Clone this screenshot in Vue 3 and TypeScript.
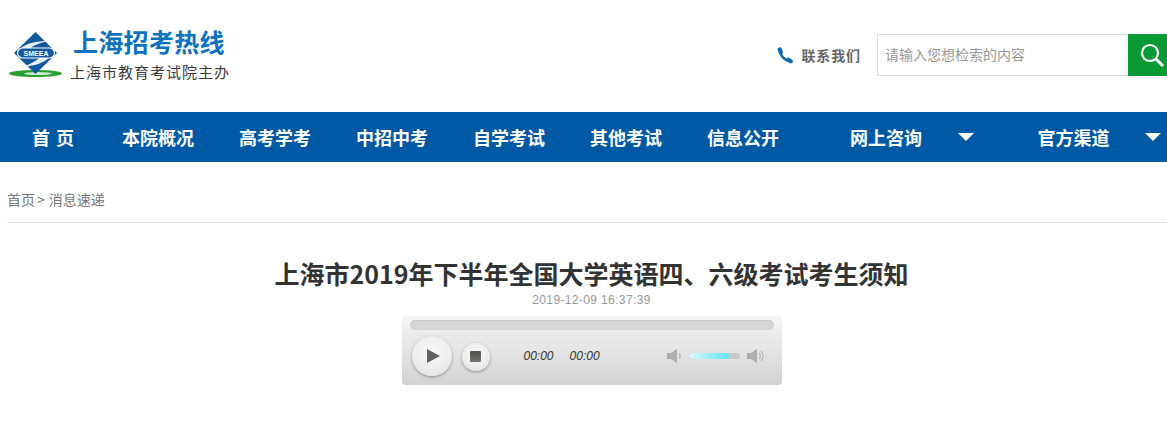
<template>
  <div class="page">
    <header class="top">
      <div class="brand">
        <svg class="logo" width="54" height="49" viewBox="0 0 54 49">
          <ellipse cx="26.500" cy="43.500" rx="26.500" ry="3.600" fill="#2a9f32" />
          <ellipse cx="29" cy="43.600" rx="14" ry="1.500" fill="#cfe9cf" />
          <path d="M26.500 2 48 23 26.500 44 5 23Z" fill="#11599f" />
          <path d="M11 19 C17 13 28 11 39 11 C31 13 25 15 20 19Z" fill="#e9f1f8" />
          <path d="M41 27 C35 33 25 36 14 37 C21 34 27 31 32 27Z" fill="#e9f1f8" />
          <rect x="8.500" y="18" width="37" height="10" rx="5" fill="#11599f" stroke="#fff" stroke-width="1.200" />
          <text x="27" y="26" text-anchor="middle" class="logo-text">SMEEA</text>
        </svg>
        <div class="brand-text">
          <div class="brand-title">上海招考热线</div>
          <div class="brand-sub">上海市教育考试院主办</div>
        </div>
      </div>
      <div class="tools">
        <svg class="phone" width="16" height="17" viewBox="0 0 16 17" fill="none" stroke="#0d6ab0" stroke-linecap="round">
          <path d="M3 4C3.500 8.500 7 12.500 12 14" stroke-width="2.400" />
          <path d="M2.800 2.500l1 3" stroke-width="4.200" />
          <path d="M11.200 12.800l2.600 1.500" stroke-width="4.200" />
        </svg>
        <span class="contact">联系我们</span>
        <div class="search">
          <span class="search-text">请输入您想检索的内容</span>
          <button class="search-btn" type="button" aria-label="搜索">
            <svg width="26" height="26" viewBox="0 0 26 26" fill="none" stroke="#fff">
              <circle cx="11" cy="11" r="8" stroke-width="2.200" />
              <path d="M17 17l7 7" stroke-width="3" />
            </svg>
          </button>
        </div>
      </div>
    </header>

    <nav class="nav">
      <a v-for="item in navItems" :key="item.label" class="nav-item" :class="item.cls">
        {{ item.label }}
        <i v-if="item.caret" class="caret"></i>
      </a>
    </nav>

    <div class="crumb">
      <span>首页</span><span class="sep">&gt;</span><span>消息速递</span>
    </div>

    <main class="article">
      <h1>上海市2019年下半年全国大学英语四、六级考试考生须知</h1>
      <div class="date">2019-12-09 16:37:39</div>

      <div class="player">
        <div class="progress"></div>
        <div class="controls">
          <button class="btn-play" type="button" aria-label="播放"><i></i></button>
          <button class="btn-stop" type="button" aria-label="停止"><i></i></button>
          <span class="time first">00:00</span>
          <span class="time">00:00</span>
          <svg class="vol low" width="18" height="16" viewBox="0 0 18 16">
            <path d="M1 5h4l6-4v14l-6-4H1Z" fill="#adadad" />
            <path d="M13 5.500a3.500 3.500 0 0 1 0 5" fill="none" stroke="#b4b4b4" stroke-width="1.400" />
          </svg>
          <div class="vol-bar"><div class="vol-fill" :style="{ width: volume + '%' }"></div></div>
          <svg class="vol" width="20" height="16" viewBox="0 0 20 16">
            <path d="M1 5h4l6-4v14l-6-4H1Z" fill="#adadad" />
            <path d="M13 5a4 4 0 0 1 0 6M15 3a7 7 0 0 1 0 10" fill="none" stroke="#b4b4b4" stroke-width="1.200" />
          </svg>
        </div>
      </div>
    </main>
  </div>
</template>

<script setup lang="ts">
interface NavItem {
  label: string
  caret?: boolean
  cls?: string
}

const navItems: NavItem[] = [
  { label: '首 页', cls: 'home' },
  { label: '本院概况' },
  { label: '高考学考' },
  { label: '中招中考' },
  { label: '自学考试' },
  { label: '其他考试' },
  { label: '信息公开' },
  { label: '网上咨询', caret: true, cls: 'drop first-drop' },
  { label: '官方渠道', caret: true, cls: 'drop' }
]

const volume = 80
</script>

<style>
html,
body {
  margin: 0;
  background: #fff;
  overflow: hidden;
}
</style>

<style scoped>
.page {
  font-family: "Noto Sans CJK SC", "Liberation Sans", sans-serif;
  color: #333;
}

.top {
  height: 112px;
  display: flex;
  justify-content: space-between;
  box-sizing: border-box;
  padding: 23px 0 0 9px;
}

.brand {
  display: flex;
  align-items: flex-start;
}

.logo {
  margin-top: 7px;
}

.logo-text {
  font-family: "Liberation Sans", sans-serif;
  font-size: 7px;
  font-weight: 700;
  fill: #fff;
}

.brand-text {
  margin-left: 7px;
}

.brand-title {
  font-size: 25px;
  line-height: 36px;
  font-weight: 700;
  color: #0b72c0;
  margin-left: 3px;
  letter-spacing: 0.300px;
}

.brand-sub {
  font-size: 15px;
  line-height: 22px;
  color: #3c3c3c;
  letter-spacing: 1px;
  margin-top: 2px;
}

.tools {
  display: flex;
  align-items: center;
  height: 42px;
  margin-top: 11px;
}

.phone {
  margin-right: 8px;
  margin-top: 0;
}

.contact {
  font-size: 14px;
  font-weight: 700;
  color: #666;
  letter-spacing: 0.900px;
  margin-right: 16px;
}

.search {
  width: 290px;
  height: 42px;
  box-sizing: border-box;
  border: 1px solid #ddd;
  border-right: 0;
  display: flex;
  align-items: center;
  justify-content: space-between;
}

.search-text {
  font-size: 14px;
  color: #999;
  margin-left: 7px;
  margin-top: -3px;
}

.search-btn {
  width: 39px;
  height: 42px;
  margin: -1px 0;
  padding: 0;
  border: 0;
  background: #0a9a35;
  display: flex;
  align-items: center;
  justify-content: center;
}

.search-btn svg {
  margin-left: 9px;
  flex: none;
}

.nav {
  height: 50px;
  background: #0059a5;
  display: flex;
  align-items: center;
  padding-left: 9.500px;
}

.nav-item {
  padding: 0 22.500px;
  font-size: 18px;
  font-weight: 700;
  line-height: 50px;
  color: #fff;
  white-space: nowrap;
  display: flex;
  align-items: center;
}

.nav-item.home {
  padding-right: 24.500px;
  letter-spacing: 1px;
}

.nav-item.first-drop {
  margin-left: 26px;
}

.nav-item.drop {
  padding-right: 0;
}

.nav-item.drop + .nav-item.drop {
  margin-left: 41px;
}

.nav-item.drop + .nav-item.drop .caret {
  margin-left: 35px;
}

.caret {
  width: 0;
  height: 0;
  border-left: 8px solid transparent;
  border-right: 8px solid transparent;
  border-top: 8px solid #fff;
  margin-left: 36px;
}

.crumb {
  margin: 0 0 0 7px;
  height: 61px;
  box-sizing: border-box;
  padding-top: 27px;
  border-bottom: 1px solid #ddd;
  font-size: 14px;
  line-height: 20px;
  color: #777;
}

.sep {
  margin: 0 4px 0 2px;
}

.article {
  display: flex;
  flex-direction: column;
  align-items: center;
  padding-left: 16px;
}

h1 {
  margin: 31px 0 0;
  font-size: 25px;
  line-height: 38px;
  font-weight: 700;
  color: #333;
}

.date {
  font-family: "Liberation Sans", sans-serif;
  font-size: 12px;
  line-height: 16px;
  color: #999;
  letter-spacing: 0.370px;
}

.player {
  width: 380px;
  height: 69px;
  margin-top: 8px;
  box-sizing: border-box;
  padding: 4px 8px 0;
  border-radius: 4px;
  background: linear-gradient(#f5f5f5, #e4e4e4 50%, #d2d2d2);
}

.progress {
  height: 10px;
  border-radius: 5px;
  background: #d6d6d6;
  box-shadow: inset 0 1px 1px #c8c8c8;
}

.controls {
  display: flex;
  align-items: center;
  height: 42px;
  margin-top: 5px;
  padding-left: 2px;
}

.btn-play,
.btn-stop {
  padding: 0;
  border: 0;
  border-radius: 50%;
  background: radial-gradient(circle at 50% 40%, #fafafa, #ededed 55%, #d8d8d8);
  box-shadow: 0 1px 3px rgba(0, 0, 0, 0.35);
  display: flex;
  align-items: center;
  justify-content: center;
}

.btn-play {
  width: 40px;
  height: 40px;
}

.btn-play i {
  width: 0;
  height: 0;
  border-left: 13px solid #62625c;
  border-top: 7.500px solid transparent;
  border-bottom: 7.500px solid transparent;
  margin-left: 4px;
}

.btn-stop {
  width: 28px;
  height: 28px;
  margin-left: 10px;
  margin-top: 1px;
}

.btn-stop i {
  width: 11px;
  height: 11px;
  border-radius: 1px;
  background: linear-gradient(#4f4f4b, #73736d);
}

.time {
  font-family: "Liberation Sans", sans-serif;
  font-size: 12px;
  font-style: italic;
  color: #333;
  margin-left: 16px;
}

.time.first {
  margin-left: 34px;
}

.vol {
  margin-top: -1px;
}

.vol.low {
  margin-left: 66px;
}

.vol-bar {
  width: 51px;
  height: 6px;
  margin: 0 6px 0 5px;
  border-radius: 3px;
  background: #c8c8c8;
  overflow: hidden;
}

.vol-fill {
  height: 100%;
  border-radius: 3px;
  background: linear-gradient(90deg, #dcf7fb, #5fe4f7);
}
</style>
